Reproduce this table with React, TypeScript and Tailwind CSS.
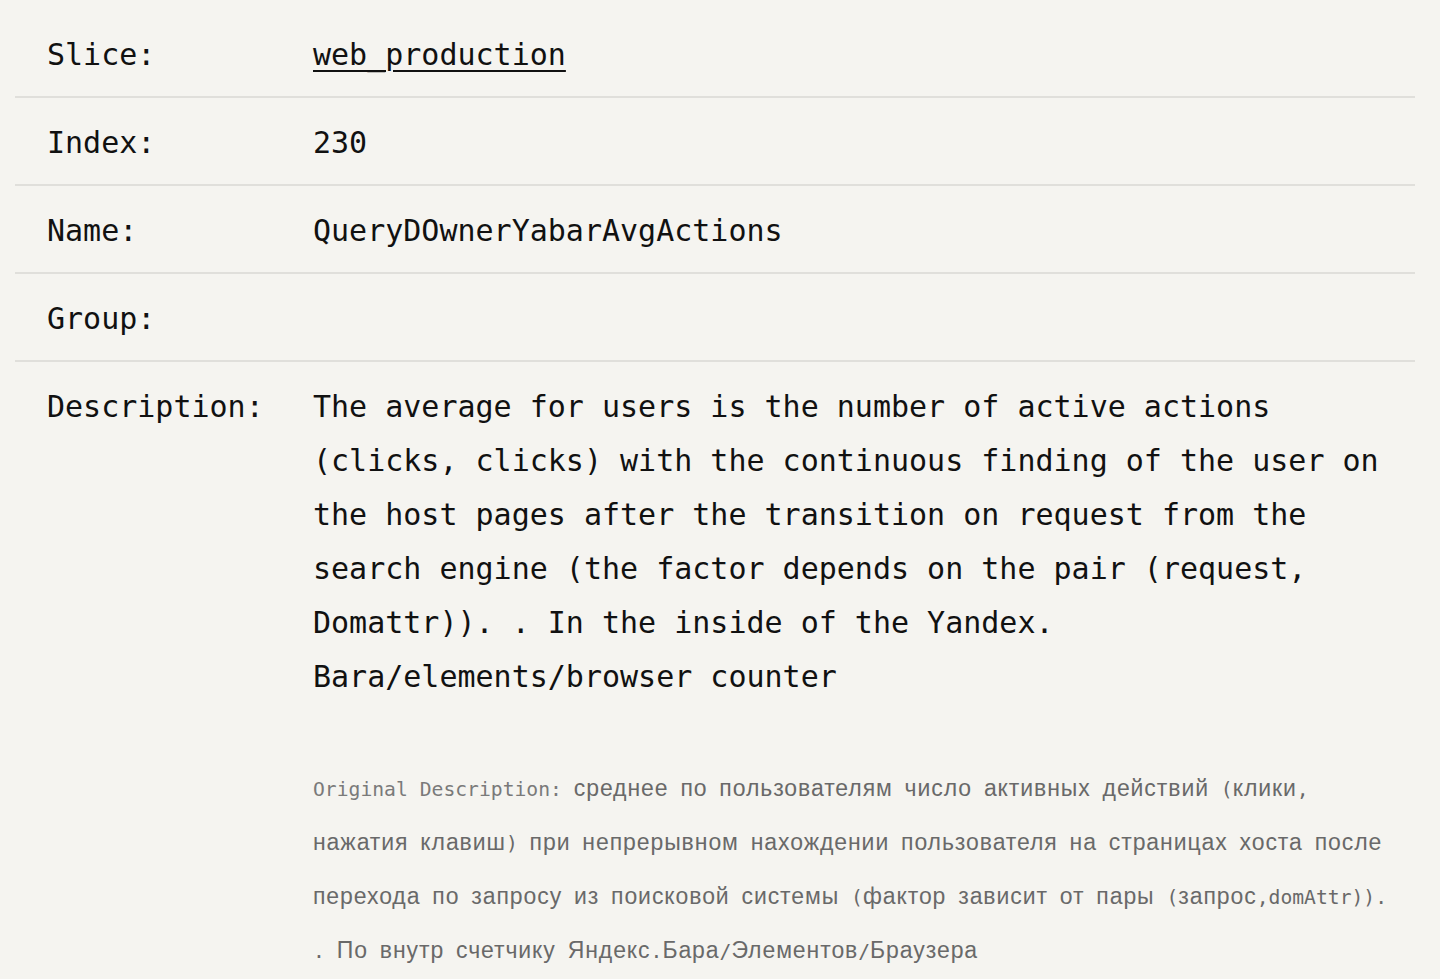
import React from "react";

const mono = "font-['DejaVu_Sans_Mono','Liberation_Mono',monospace]";

type Row = { label: string; value?: React.ReactNode };

// Cyrillic runs fall back to a sans face, the rest stays in the mono face
function Mixed({ text }: { text: string }) {
  const parts = text.split(/([А-Яа-яЁё]+)/);
  return (
    <>
      {parts.map((p, i) =>
        /[А-Яа-яЁё]/.test(p) ? (
          <span
            key={i}
            className="font-['Liberation_Sans',Arial,sans-serif] text-[23px] leading-none tracking-[0.04em]"
          >
            {p}
          </span>
        ) : (
          <span key={i} className="whitespace-pre">
            {p}
          </span>
        )
      )}
    </>
  );
}

function DescriptionValue() {
  return (
    <div>
      <p>
        The average for users is the number of active actions (clicks, clicks) with the continuous finding of
        the user on the host pages after the transition on request from the search engine (the factor depends on
        the pair (request, Domattr)). . In the inside of the Yandex. Bara/elements/browser counter
      </p>
      <div className="mt-[59px] text-[#696969] text-[19.7px] leading-[54px] whitespace-nowrap">
        <div>
          <span className="text-[#7a7a7a]">Original Description:</span>
          <Mixed text=" среднее по пользователям число активных действий (клики," />
        </div>
        <div>
          <Mixed text="нажатия клавиш) при непрерывном нахождении пользователя на страницах хоста после" />
        </div>
        <div>
          <Mixed text="перехода по запросу из поисковой системы (фактор зависит от пары (запрос,domAttr))." />
        </div>
        <div>
          <Mixed text=". По внутр счетчику Яндекс.Бара/Элементов/Браузера" />
        </div>
      </div>
    </div>
  );
}

export default function App() {
  const rows: Row[] = [
    {
      label: "Slice:",
      value: (
        <a href="#" className="underline underline-offset-[5px] decoration-2">
          web_production
        </a>
      ),
    },
    { label: "Index:", value: "230" },
    { label: "Name:", value: "QueryDOwnerYabarAvgActions" },
    { label: "Group:", value: "" },
    { label: "Description:", value: <DescriptionValue /> },
  ];

  return (
    <div className={`min-h-screen bg-[#f5f4f0] pl-[15px] pr-[25px] pt-[10px] text-[#111] text-[30px] leading-[54px] ${mono}`}>
      {rows.map((row) => (
        <div key={row.label} className="flex pl-8 pt-[18px] pb-[14px] border-b-2 border-[#e0dfdb]">
          <div className="w-[266px] shrink-0">{row.label}</div>
          <div className="flex-1 pr-2 min-h-[54px]">{row.value}</div>
        </div>
      ))}
    </div>
  );
}
